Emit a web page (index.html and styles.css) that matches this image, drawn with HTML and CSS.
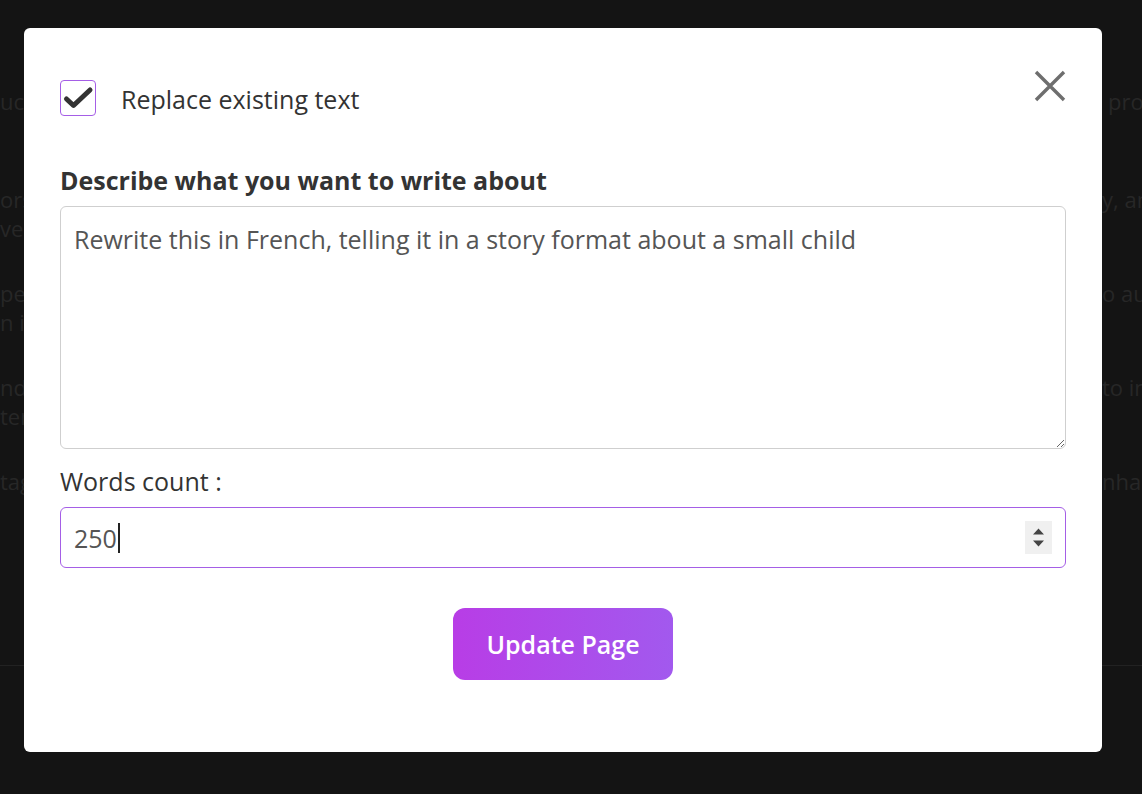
FILE: index.html
```html
<!DOCTYPE html>
<html lang="en">
<head>
<meta charset="utf-8">
<title>Rewrite</title>
<link rel="stylesheet" href="styles.css">
</head>
<body>
<div class="page">
  <div class="para first">
    <div class="line"><span class="l">uct</span><span class="r shift">pro</span></div>
  </div>
  <div class="para">
    <div class="line"><span class="l">ors</span><span class="r">y, an</span></div>
    <div class="line"><span class="l">ve</span><span class="r"></span></div>
  </div>
  <div class="para">
    <div class="line"><span class="l">pe</span><span class="r">o au</span></div>
    <div class="line"><span class="l">n i</span><span class="r"></span></div>
  </div>
  <div class="para">
    <div class="line"><span class="l">nd</span><span class="r">to in</span></div>
    <div class="line"><span class="l">ter</span><span class="r"></span></div>
  </div>
  <div class="para">
    <div class="line"><span class="l">tag</span><span class="r">nha</span></div>
  </div>
  <div class="rule"></div>
</div>

<div class="modal">
  <button class="close" aria-label="Close">
    <svg width="32" height="32" viewBox="0 0 32 32"><path d="M2 2 L30 30 M30 2 L2 30" stroke="#6e6e6e" stroke-width="3.4" fill="none"/></svg>
  </button>
  <div class="check-row">
    <span class="checkbox">
      <svg width="36" height="36" viewBox="0 0 36 36"><path d="M6.5 19 L13.5 25.5 L30 10" stroke="#333" stroke-width="5" fill="none" stroke-linecap="round" stroke-linejoin="round"/></svg>
    </span>
    <span class="check-label">Replace existing text</span>
  </div>
  <div class="title">Describe what you want to write about</div>
  <textarea class="prompt">Rewrite this in French, telling it in a story format about a small child</textarea>
  <div class="count-label">Words count :</div>
  <div class="number">
    <span class="value">250</span><span class="caret"></span>
    <span class="spin">
      <svg width="27" height="33" viewBox="0 0 27 33"><path d="M8 13.5 L13.5 7.5 L19 13.5 Z M8 19.5 L19 19.5 L13.5 25.5 Z" fill="#444"/></svg>
    </span>
  </div>
  <div class="actions">
    <button class="update">Update Page</button>
  </div>
</div>
</body>
</html>
```
FILE: styles.css
```css
html, body {
  margin: 0;
  padding: 0;
  height: 100%;
}
body {
  background: #141414;
  font-family: "Open Sans", "Liberation Sans", sans-serif;
  overflow: hidden;
  position: relative;
}
.page {
  padding-top: 87px;
  color: #272727;
  font-size: 22px;
  line-height: 29px;
}
.para {
  margin-bottom: 36px;
}
.para.first {
  margin-bottom: 69px;
}
.line {
  display: grid;
  grid-template-columns: 1102px 1fr;
  white-space: nowrap;
  height: 29px;
}
.l {
  overflow: hidden;
}
.r.shift {
  padding-left: 6px;
}
.rule {
  margin-top: 169px;
  border-top: 1px solid #222;
}

.modal {
  position: absolute;
  top: 28px;
  left: 24px;
  width: 1078px;
  height: 724px;
  box-sizing: border-box;
  background: #fff;
  border-radius: 6px;
  padding: 52px 36px 0 36px;
  display: flex;
  flex-direction: column;
  color: #333;
}
.close {
  position: absolute;
  top: 42px;
  right: 36px;
  width: 32px;
  height: 32px;
  padding: 0;
  border: none;
  background: none;
  display: block;
}
.close svg {
  display: block;
}
.check-row {
  display: flex;
  align-items: center;
  gap: 25px;
  height: 36px;
}
.checkbox {
  width: 36px;
  height: 36px;
  box-sizing: border-box;
  border: 1px solid #a55ee6;
  border-radius: 4px;
  display: flex;
  align-items: center;
  justify-content: center;
}
.checkbox svg {
  display: block;
  margin: -1px;
}
.check-label {
  font-size: 25px;
  line-height: 36px;
  color: #333;
  position: relative;
  top: 1px;
}
.title {
  margin-top: 48px;
  font-size: 25px;
  font-weight: 700;
  line-height: 32px;
  color: #333;
}
.prompt {
  margin-top: 10px;
  width: 100%;
  height: 243px;
  box-sizing: border-box;
  border: 1px solid #cfcfcf;
  border-radius: 6px;
  padding: 14px 13px;
  font-family: "Open Sans", "Liberation Sans", sans-serif;
  font-size: 25px;
  line-height: 36px;
  color: #555;
  resize: vertical;
  outline: none;
  display: block;
}
.count-label {
  margin-top: 14px;
  font-size: 25px;
  line-height: 36px;
  color: #333;
}
.number {
  margin-top: 8px;
  height: 61px;
  box-sizing: border-box;
  border: 1px solid #a55ee6;
  border-radius: 6px;
  padding: 0 13px;
  display: flex;
  align-items: center;
  font-size: 25px;
  color: #555;
}
.caret {
  width: 2px;
  height: 30px;
  background: #222;
  margin-left: 1px;
}
.spin {
  margin-left: auto;
  width: 27px;
  height: 33px;
  background: #f0f0f0;
  display: block;
}
.spin svg {
  display: block;
}
.actions {
  margin-top: 40px;
  display: flex;
  justify-content: center;
}
.update {
  width: 220px;
  height: 72px;
  border: none;
  border-radius: 12px;
  background: linear-gradient(90deg, #b83de6 0%, #a259ee 100%);
  color: #fff;
  font-family: "Open Sans", "Liberation Sans", sans-serif;
  font-size: 25px;
  font-weight: 600;
  padding: 0;
}
```
